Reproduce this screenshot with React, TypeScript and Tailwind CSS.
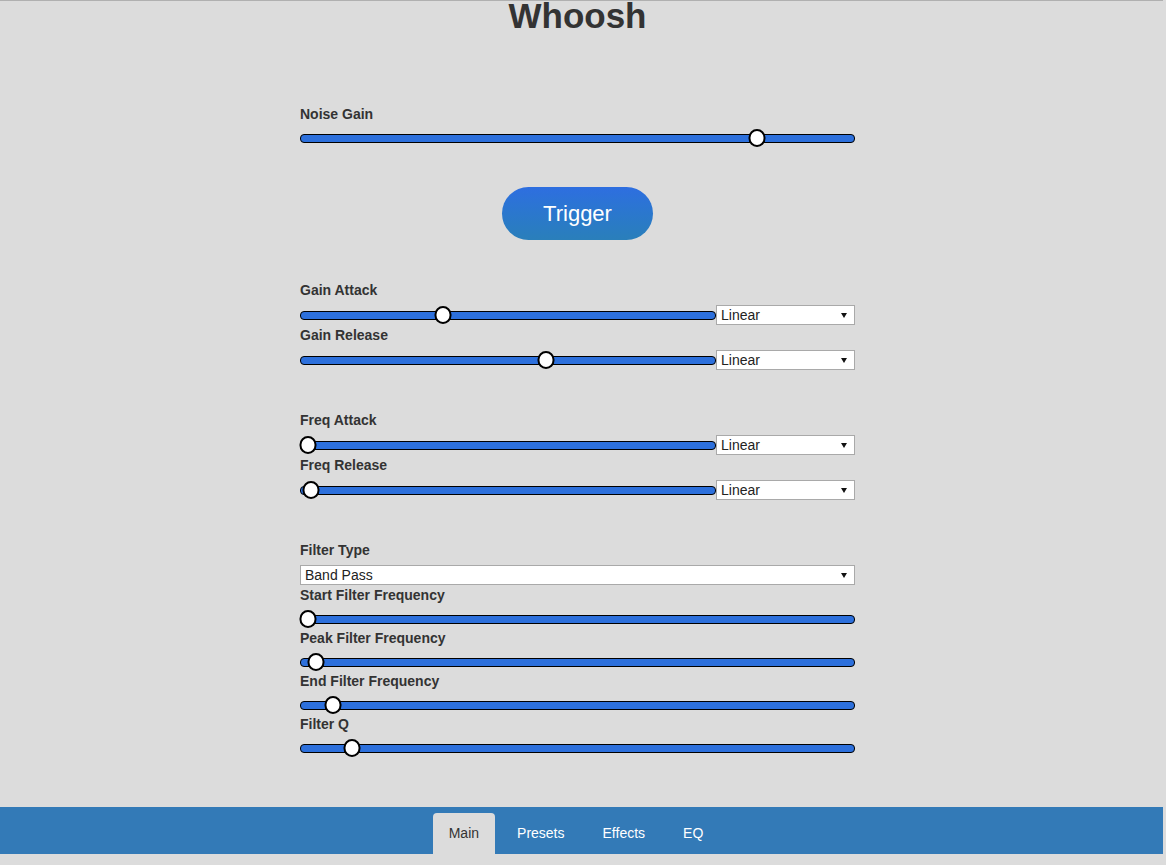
const sliders = {
  noise: 457,
  gainAttack: 143,
  gainRelease: 246,
  freqAttack: 8,
  freqRelease: 11,
  startFilter: 8,
  peakFilter: 16,
  endFilter: 33,
  filterQ: 52,
};

const tabs = ["Main", "Presets", "Effects", "EQ"];

function Label({ children }: { children: string }) {
  return <div className="h-[20px] text-[14px] leading-[20px] font-bold text-[#333]">{children}</div>;
}

function Slider({ pos }: { pos: number }) {
  return (
    <div className="relative flex h-[18px] flex-1 items-center">
      <div className="h-[9px] w-full rounded-[4px] border border-black bg-[#2d70dc]" />
      <div
        className="absolute top-1/2 h-[18px] w-[17px] -translate-x-1/2 -translate-y-1/2 rounded-full border-2 border-black bg-white"
        style={{ left: pos }}
      />
    </div>
  );
}

function Select({ value, wide }: { value: string; wide?: boolean }) {
  return (
    <div
      className={`flex h-[20px] items-center border border-[#a9a9a9] bg-white pl-[4px] text-[14px] leading-none text-[#222] ${
        wide ? "w-full" : "w-[139px] shrink-0"
      }`}
    >
      <span>{value}</span>
      <svg className="mr-[7px] ml-auto" width="6" height="5" viewBox="0 0 6 5">
        <polygon points="0,0 6,0 3,5" fill="#111" />
      </svg>
    </div>
  );
}

function SliderRow({ label, pos }: { label: string; pos: number }) {
  return (
    <>
      <Label>{label}</Label>
      <div className="mt-[5px] flex h-[20px] items-center">
        <Slider pos={pos} />
        <Select value="Linear" />
      </div>
    </>
  );
}

function PlainSlider({ label, pos }: { label: string; pos: number }) {
  return (
    <>
      <Label>{label}</Label>
      <div className="mt-[5px] flex">
        <Slider pos={pos} />
      </div>
    </>
  );
}

export default function App() {
  return (
    <div className="min-h-[865px] w-full bg-[#dcdcdc] font-['Liberation_Sans',Arial,sans-serif] text-[#333]">
      <div className="flex h-[865px] w-[1163px] flex-col border-t border-[#b0b0b0]">
        <div className="flex w-[1155px] flex-col items-center">
          <h1 className="-mt-[5px] h-[40px] text-[35px] leading-[40px] font-bold text-[#333]">Whoosh</h1>
          <div className="mt-[68px] flex w-[555px] flex-col">
            <PlainSlider label="Noise Gain" pos={sliders.noise} />

            <button className="mt-[40px] h-[53px] w-[151px] self-center rounded-full bg-linear-to-b from-[#2e6ee0] to-[#2a7fba] text-[22px] text-white">
              Trigger
            </button>

            <div className="mt-[40px] flex flex-col">
              <SliderRow label="Gain Attack" pos={sliders.gainAttack} />
              <SliderRow label="Gain Release" pos={sliders.gainRelease} />
            </div>

            <div className="mt-[40px] flex flex-col">
              <SliderRow label="Freq Attack" pos={sliders.freqAttack} />
              <SliderRow label="Freq Release" pos={sliders.freqRelease} />
            </div>

            <div className="mt-[40px] flex flex-col">
              <Label>Filter Type</Label>
              <div className="mt-[5px]">
                <Select value="Band Pass" wide />
              </div>
              <PlainSlider label="Start Filter Frequency" pos={sliders.startFilter} />
              <PlainSlider label="Peak Filter Frequency" pos={sliders.peakFilter} />
              <PlainSlider label="End Filter Frequency" pos={sliders.endFilter} />
              <PlainSlider label="Filter Q" pos={sliders.filterQ} />
            </div>
          </div>
        </div>

        <nav className="mt-auto mb-[11px] h-[47px] bg-[#337ab7]">
          <div className="flex h-full w-[1152px] items-end justify-center gap-[6px]">
            {tabs.map((tab, i) => (
              <div
                key={tab}
                className={
                  i === 0
                    ? "flex h-[41px] items-center rounded-t-[4px] bg-[#dcdcdc] px-4 text-[14px] text-[#333]"
                    : "flex h-[41px] items-center px-4 text-[14px] text-white"
                }
              >
                {tab}
              </div>
            ))}
          </div>
        </nav>
      </div>
    </div>
  );
}
